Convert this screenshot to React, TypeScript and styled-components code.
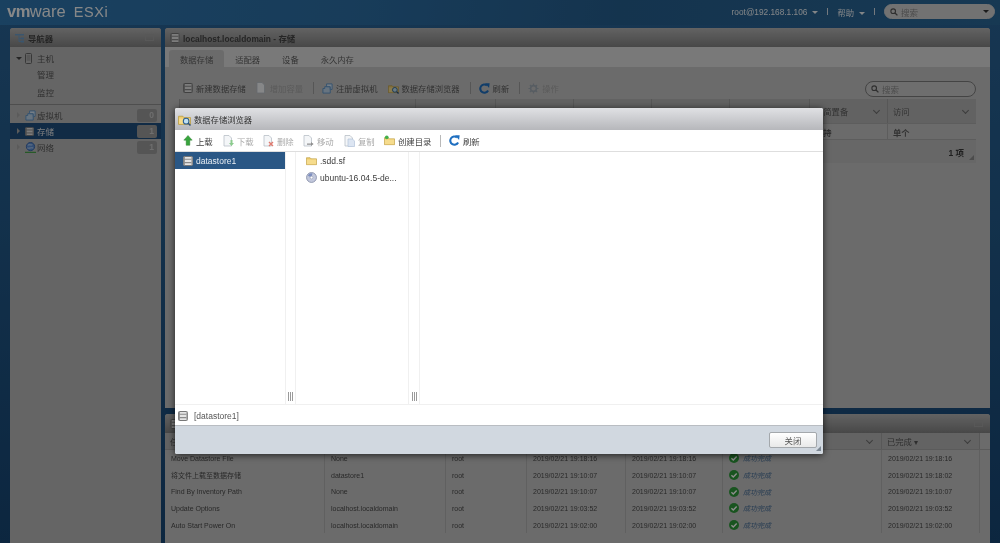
// App.tsx
import React from 'react';
import styled, { createGlobalStyle } from 'styled-components';

const GlobalStyle = createGlobalStyle`
  html, body {
    margin: 0;
    padding: 0;
    background: #14304c;
  }
  body {
    font-family: 'Liberation Sans', 'Noto Sans CJK SC', sans-serif;
    font-size: 8.5px;
    color: #555;
  }
`;

const Page = styled.div`
  position: relative;
  width: 1000px;
  height: 543px;
  overflow: hidden;
  display: flex;
  flex-direction: column;
  background: linear-gradient(180deg, #2a6496 0%, #235a8a 40%, #174674 100%);
  filter: blur(0.5px);
`;

const Dim = styled.div`
  position: absolute;
  inset: 0;
  background: rgba(0, 0, 0, 0.45);
`;

/* top bar */
const TopBar = styled.header`
  height: 25px;
  flex: none;
  display: flex;
  align-items: center;
  padding: 0 5px 0 7px;
  background: linear-gradient(100deg, #3077b0 0%, #2c6ea4 35%, #265f8f 62%, #2a6898 100%);
  color: #eef2f6;
`;

const Logo = styled.div`
  display: flex;
  align-items: baseline;
  font-size: 16.5px;
  color: #f6f7f8;
  margin-top: -2px;
`;

const LogoBold = styled.b`
  font-weight: 700;
  letter-spacing: -0.5px;
`;

const LogoEsx = styled.span`
  margin-left: 8px;
  letter-spacing: 0.6px;
  font-size: 14.5px;
`;

const TopRight = styled.div`
  margin-left: auto;
  display: flex;
  align-items: center;
  gap: 9px;
  font-size: 8.3px;
  margin-top: -2px;
`;

const Caret = styled.span`
  display: inline-block;
  width: 0;
  height: 0;
  margin-left: 5px;
  vertical-align: middle;
  border-left: 3px solid transparent;
  border-right: 3px solid transparent;
  border-top: 3px solid currentColor;
`;

const Pipe = styled.span`
  width: 1px;
  height: 7px;
  background: #d4dde6;
`;

const SearchBox = styled.div<{ $w: number; $h: number; $dark?: boolean }>`
  width: ${p => p.$w}px;
  height: ${p => p.$h}px;
  box-sizing: border-box;
  display: flex;
  align-items: center;
  gap: 3px;
  padding: 0 5px;
  border-radius: 8px;
  border: 1px solid ${p => (p.$dark ? '#7d7d7d' : '#d0d0d0')};
  background: ${p => (p.$dark ? '#c8c8c8' : '#cfcfcf')};
  color: #8a8a8a;
  font-size: 8.5px;
  ${p => (p.$dark ? 'margin-left: auto; margin-top: 2px;' : '')}
`;

const SearchCaret = styled(Caret)`
  margin-left: auto;
  color: #333;
`;

/* work area */
const Work = styled.div`
  flex: 1;
  min-height: 0;
  display: flex;
  gap: 4px;
  padding: 3px 10px 0;
`;

const Panel = styled.section<{ $grow?: boolean }>`
  display: flex;
  flex-direction: column;
  background: #b9b9b9;
  border-radius: 3px 3px 0 0;
  overflow: hidden;
  ${p => (p.$grow ? 'flex: 1; min-height: 0;' : '')}
`;

const SidePanel = styled(Panel)`
  width: 151px;
  flex: none;
`;

const MainCol = styled.div`
  flex: 1;
  min-width: 0;
  display: flex;
  flex-direction: column;
  gap: 6px;
`;

const PanelTitle = styled.div`
  height: 19px;
  flex: none;
  display: flex;
  align-items: center;
  gap: 3px;
  padding: 0 5px;
  background: linear-gradient(180deg, #b4b4b4, #838383);
  color: #444;
  font-size: 8.4px;
  font-weight: 700;
`;

const Pin = styled.span`
  margin-left: auto;
  width: 7px;
  height: 5px;
  margin-right: 2px;
  border: 1px solid #a0a0a0;
`;

/* navigator */
const NavBlock = styled.div`
  padding: 3px 0 2px;
  border-bottom: 1px solid #8e8e8e;
  margin-bottom: 2px;
`;

const NavRow = styled.div<{ $active?: boolean; $h?: number }>`
  height: ${p => p.$h ?? 16}px;
  display: flex;
  align-items: center;
  padding-left: 6px;
  padding-right: 4px;
  font-size: 8.5px;
  color: ${p => (p.$active ? '#e6e6e6' : '#575757')};
  background: ${p => (p.$active ? '#1f4f7f' : 'transparent')};
`;

const TwistSlot = styled.span`
  width: 9px;
  flex: none;
  display: flex;
  align-items: center;
`;

const IconSlot = styled.span`
  width: 12px;
  flex: none;
  display: flex;
  align-items: center;
`;

const Twist = styled.span<{ $open?: boolean }>`
  width: 0;
  height: 0;
  ${p =>
    p.$open
      ? `border-left: 3px solid transparent; border-right: 3px solid transparent; border-top: 3px solid #444;`
      : `border-top: 3px solid transparent; border-bottom: 3px solid transparent; border-left: 3px solid #a6a6a6; margin-left: 1px;`}
`;

const Badge = styled.span`
  margin-left: auto;
  width: 20px;
  height: 13px;
  border-radius: 2px;
  background: #9c9c9c;
  color: #c8c8c8;
  font-weight: 700;
  text-align: right;
  padding-right: 3px;
  box-sizing: border-box;
  line-height: 13px;
`;

/* storage panel */
const TabRow = styled.div`
  height: 20px;
  flex: none;
  display: flex;
  align-items: flex-end;
  padding-left: 4px;
  background: #dcdcdc;
`;

const Tab = styled.div<{ $active?: boolean }>`
  height: 17px;
  display: flex;
  align-items: center;
  justify-content: center;
  padding: 0 11px;
  background: ${p => (p.$active ? '#c4c4c4' : 'transparent')};
  border-radius: 3px 3px 0 0;
  font-size: 8.3px;
  color: #5f5f5f;
`;

const TabContent = styled.div`
  flex: 1;
  min-height: 0;
  background: #c4c4c4;
  padding: 12px 14px 0;
  display: flex;
  flex-direction: column;
`;

const ToolRow = styled.div`
  height: 18px;
  flex: none;
  display: flex;
  align-items: center;
  padding-left: 4px;
  font-size: 8.3px;
`;

const Tool = styled.span<{ $off?: boolean }>`
  display: inline-flex;
  align-items: center;
  gap: 3px;
  margin-right: 10px;
  color: ${p => (p.$off ? '#a4a4a4' : '#5b5b5b')};
`;

const ToolSep = styled.span`
  width: 1px;
  height: 12px;
  background: #9d9d9d;
  margin-right: 8px;
`;

const GridWrap = styled.div`
  margin-top: 2px;
  background: #bcbcbc;
`;

const GridHead = styled.div`
  height: 24px;
  display: grid;
  grid-template-columns: 236px 80px 78px 78px 78px 80px 78px 89px;
  background: #b2b2b2;
`;

const GridBody = styled(GridHead)`
  height: 17px;
  background: #c4c4c4;
  border-top: 1px solid #aaa;
  border-bottom: 1px solid #aaa;
  box-sizing: border-box;
`;

const HeadCell = styled.div`
  display: flex;
  align-items: center;
  padding: 0 4px 0 5px;
  border-left: 1px solid #9f9f9f;
  font-size: 8.3px;
  color: #5c5c5c;
`;

const BodyCell = styled(HeadCell)`
  font-weight: 600;
  border-left-color: #aaa;
`;

const Chevron = styled.span`
  margin-left: auto;
  margin-right: 4px;
  width: 4px;
  height: 4px;
  border-right: 1px solid #6e6e6e;
  border-bottom: 1px solid #6e6e6e;
  transform: translateY(-1px) rotate(45deg);
`;

const GridFoot = styled.div`
  height: 23px;
  position: relative;
  display: flex;
  align-items: center;
  justify-content: flex-end;
  padding-right: 12px;
  font-weight: 700;
  color: #3a3a3a;
`;

const Grip = styled.span<{ $light?: boolean }>`
  position: absolute;
  right: 2px;
  bottom: 3px;
  width: 0;
  height: 0;
  border-left: 5px solid transparent;
  border-bottom: 5px solid ${p => (p.$light ? '#7d8894' : '#8a8a8a')};
`;

/* recent tasks */
const TasksPanel = styled(Panel)`
  height: 129px;
  flex: none;
  background: #c4c4c4;
`;

const taskCols = '160px 121px 81px 99px 97px 159px 98px 10px';

const TaskHead = styled.div`
  height: 16px;
  flex: none;
  display: grid;
  grid-template-columns: ${taskCols};
  background: #b4b4b4;
  border-bottom: 1px solid #a6a6a6;
  font-size: 8.3px;
  color: #555;
`;

const TaskHeadCell = styled.div`
  display: flex;
  align-items: center;
  padding: 0 5px;
  border-right: 1px solid #a0a0a0;
`;

const TaskRow = styled.div`
  height: 16.7px;
  flex: none;
  display: grid;
  grid-template-columns: ${taskCols};
  font-size: 7px;
  color: #4a4a4a;
`;

const TaskCell = styled.div`
  display: flex;
  align-items: center;
  gap: 4px;
  padding: 0 6px;
  border-right: 1px solid #b0b0b0;
  white-space: nowrap;
`;

const StatusText = styled.i`
  color: #476d96;
`;

const EmptyCell = styled.div`
  background: #c4c4c4;
`;

/* datastore browser dialog */
const Dialog = styled.div`
  position: absolute;
  left: 175px;
  top: 108px;
  width: 648px;
  height: 346px;
  display: flex;
  flex-direction: column;
  background: #fff;
  border-radius: 2px;
  box-shadow: 0 1px 7px rgba(0, 0, 0, 0.7);
  overflow: hidden;
`;

const DialogTitle = styled.div`
  height: 22px;
  flex: none;
  display: flex;
  align-items: center;
  gap: 3px;
  padding-left: 3px;
  background: linear-gradient(180deg, #e0e1e4, #b6b7bb);
  color: #333;
  font-size: 8.3px;
`;

const DialogTools = styled.div`
  height: 21px;
  flex: none;
  display: flex;
  align-items: center;
  padding-left: 8px;
  border-bottom: 1px solid #dedede;
  font-size: 8.4px;
`;

const DTool = styled.span<{ $off?: boolean; $w: number }>`
  display: inline-flex;
  align-items: center;
  gap: 3px;
  width: ${p => p.$w}px;
  color: ${p => (p.$off ? '#a9a9a9' : '#3f3f3f')};
`;

const DSep = styled.span`
  width: 1px;
  height: 12px;
  background: #b9b9b9;
  margin: 0 8px 0 1px;
`;

const Columns = styled.div`
  flex: 1;
  min-height: 0;
  display: grid;
  grid-template-columns: 110px 11px 112px 12px 1fr;
  border-bottom: 1px solid #f0f0f0;
`;

const FileCol = styled.div`
  display: flex;
  flex-direction: column;
`;

const FileRow = styled.div<{ $active?: boolean }>`
  height: 17px;
  display: flex;
  align-items: center;
  gap: 3px;
  padding-left: ${p => (p.$active ? 8 : 10)}px;
  background: ${p => (p.$active ? '#2a5785' : 'transparent')};
  color: ${p => (p.$active ? '#e8eef4' : '#3b3b3b')};
  white-space: nowrap;
`;

const Splitter = styled.div`
  display: flex;
  align-items: flex-end;
  justify-content: center;
  padding-bottom: 3px;
  border-left: 1px solid #f0f0f0;
  border-right: 1px solid #f0f0f0;
`;

const SplitGrip = styled.span`
  width: 5px;
  height: 9px;
  background: repeating-linear-gradient(90deg, #9a9a9a 0 1px, #fff 1px 2px);
`;

const StatusBar = styled.div`
  height: 19px;
  flex: none;
  display: flex;
  align-items: center;
  gap: 6px;
  padding: 1px 0 0 3px;
  color: #555;
  border-bottom: 1px solid #b9bdc2;
`;

const DialogFoot = styled.div`
  position: relative;
  height: 28px;
  flex: none;
  display: flex;
  align-items: center;
  justify-content: flex-end;
  padding-right: 6px;
  background: #d1d8e0;
`;

const CloseButton = styled.button`
  width: 48px;
  height: 16px;
  padding: 0;
  border: 1px solid #a4a8ac;
  border-radius: 2px;
  background: linear-gradient(180deg, #fff, #e9e9e9);
  color: #555;
  font-family: inherit;
  font-size: 8.5px;
`;

/* icons */
const Disk: React.FC<{ s?: number }> = ({ s = 10 }) => (
  <svg width={s} height={s} viewBox="0 0 10 10">
    <rect x="0.5" y="0.5" width="9" height="9" rx="1" fill="#e4e4e4" stroke="#777" />
    <path d="M1 3.3h8M1 6.6h8" stroke="#8a8a8a" strokeWidth="1.1" />
    <path d="M1.2 1v8" stroke="#8f8f8f" strokeWidth="1.4" />
    <path d="M8.8 1v8" stroke="#a8a8a8" strokeWidth="1.2" />
  </svg>
);

const Folder: React.FC<{ s?: number; plus?: boolean; lens?: boolean }> = ({ s = 11, plus, lens }) => (
  <svg width={s} height={s} viewBox="0 0 12 12">
    <path d="M0.5 3h4l1 1.2h6v6.3h-11z" fill="#f0cd6c" stroke="#b89a3e" strokeWidth="0.7" />
    <path d="M1 5h10v5H1z" fill="#f6dc8d" />
    {plus && <circle cx="3" cy="2.5" r="2" fill="#44b04a" />}
    {lens && (
      <g>
        <circle cx="7.5" cy="7.5" r="2.6" fill="#bfe0f2" stroke="#2c5f92" strokeWidth="1" />
        <path d="M9.5 9.5l2 2" stroke="#2c4f78" strokeWidth="1.4" />
      </g>
    )}
  </svg>
);

const Refresh: React.FC<{ s?: number }> = ({ s = 11 }) => (
  <svg width={s} height={s} viewBox="0 0 12 12">
    <path d="M9.9 8.2A4.5 4.5 0 1 1 8.7 2.6" fill="none" stroke="#1f6fc0" strokeWidth="2.3" />
    <path d="M6.6 0.2L11.6 0.4 11 5.4z" fill="#1f6fc0" />
  </svg>
);

const Upload: React.FC = () => (
  <svg width="10" height="11" viewBox="0 0 10 12">
    <path d="M5 0.5L9.6 5.6H7v5.6H3V5.6H0.4z" fill="#38a53d" stroke="#2a7f2e" strokeWidth="0.5" />
  </svg>
);

const Doc: React.FC<{ mark?: 'down' | 'x' | 'move' | 'copy' }> = ({ mark }) => (
  <svg width="11" height="12" viewBox="0 0 11 12">
    <path d="M1 0.5h5l2.5 2.5v8H1z" fill="#f4f6f8" stroke="#b9c0c8" strokeWidth="0.8" />
    {mark === 'down' && <path d="M7.5 5v3H6l2.5 3L11 8H9.5V5z" fill="#8ccb8e" />}
    {mark === 'x' && <path d="M6 7l4 4M10 7l-4 4" stroke="#e07b70" strokeWidth="1.4" />}
    {mark === 'move' && <path d="M4 8.5h4V7l2.6 2L8 11V9.8H4z" fill="#8f8f8f" />}
    {mark === 'copy' && <path d="M4 4h4.5l2 2v5.5H4z" fill="#dce5f2" stroke="#b3c3da" strokeWidth="0.7" />}
  </svg>
);

const Gear: React.FC = () => (
  <svg width="11" height="11" viewBox="0 0 12 12">
    <circle cx="6" cy="6" r="3.2" fill="none" stroke="#9fa9b3" strokeWidth="1.8" />
    <path d="M6 0.5v2M6 9.5v2M0.5 6h2M9.5 6h2M2 2l1.5 1.5M8.5 8.5L10 10M10 2L8.5 3.5M3.5 8.5L2 10" stroke="#9fa9b3" strokeWidth="1.3" />
  </svg>
);

const Magnifier: React.FC = () => (
  <svg width="8" height="8" viewBox="0 0 8 8">
    <circle cx="3.2" cy="3.2" r="2.3" fill="none" stroke="#555" strokeWidth="1.1" />
    <path d="M5 5l2.4 2.4" stroke="#555" strokeWidth="1.3" />
  </svg>
);

const Tree: React.FC = () => (
  <svg width="10" height="10" viewBox="0 0 10 10">
    <path d="M0 1h9v1.5H0z" fill="#6c9cc6" />
    <path d="M4 2.5v6h2M4 5.5h2" fill="none" stroke="#6c9cc6" />
    <path d="M6 4.5h3v2H6zM6 7.5h3v2H6z" fill="#6c9cc6" />
  </svg>
);

const Phone: React.FC = () => (
  <svg width="7" height="11" viewBox="0 0 7 11">
    <rect x="0.5" y="0.5" width="6" height="10" rx="1" fill="#bbb" stroke="#666" />
    <rect x="1.6" y="1.8" width="3.8" height="6" fill="#a0a0a0" />
  </svg>
);

const Vms: React.FC = () => (
  <svg width="11" height="11" viewBox="0 0 12 12">
    <path d="M3 4h6v7H1V6h2z" fill="#bcd4ea" stroke="#5c94c8" />
    <path d="M5 1h6v6H9V4H5z" fill="#d6e6f5" stroke="#5c94c8" />
  </svg>
);

const Globe: React.FC = () => (
  <svg width="11" height="11" viewBox="0 0 12 12">
    <circle cx="6" cy="5" r="4.5" fill="#5c8fd6" stroke="#3a66ab" />
    <path d="M3 3.5c2-1.2 3 .3 5-.5M2.5 6.5c2 .8 4-.6 6.5 0" stroke="#d5e4f7" fill="none" strokeWidth="0.9" />
    <path d="M0 10.5h12V12H0z" fill="#45a34a" />
  </svg>
);

const Disc: React.FC = () => (
  <svg width="11" height="11" viewBox="0 0 12 12">
    <circle cx="6" cy="6" r="5.4" fill="#c2c8dc" stroke="#8d95ad" />
    <path d="M2 4a4.6 4.6 0 0 1 5-2.4L6 6z" fill="#7d8fc0" />
    <circle cx="6" cy="6" r="1.5" fill="#fff" stroke="#8d95ad" strokeWidth="0.6" />
  </svg>
);

const Done: React.FC = () => (
  <svg width="10" height="10" viewBox="0 0 10 10">
    <circle cx="5" cy="5" r="5" fill="#2f9a3b" />
    <path d="M2.4 5.2l1.9 1.9 3.4-3.6" fill="none" stroke="#fff" strokeWidth="1.4" />
  </svg>
);

const tasks = [
  ['Move Datastore File', 'None', 'root', '2019/02/21 19:18:16', '2019/02/21 19:18:16', '2019/02/21 19:18:16'],
  ['将文件上载至数据存储', 'datastore1', 'root', '2019/02/21 19:10:07', '2019/02/21 19:10:07', '2019/02/21 19:18:02'],
  ['Find By Inventory Path', 'None', 'root', '2019/02/21 19:10:07', '2019/02/21 19:10:07', '2019/02/21 19:10:07'],
  ['Update Options', 'localhost.localdomain', 'root', '2019/02/21 19:03:52', '2019/02/21 19:03:52', '2019/02/21 19:03:52'],
  ['Auto Start Power On', 'localhost.localdomain', 'root', '2019/02/21 19:02:00', '2019/02/21 19:02:00', '2019/02/21 19:02:00'],
];

const App: React.FC = () => (
  <Page>
    <GlobalStyle />
    <TopBar>
      <Logo>
        <LogoBold>vm</LogoBold>ware<LogoEsx>ESXi</LogoEsx>
      </Logo>
      <TopRight>
        <span>root@192.168.1.106<Caret /></span>
        <Pipe />
        <span>帮助<Caret /></span>
        <Pipe />
        <SearchBox $w={111} $h={15}>
          <Magnifier />
          <span>搜索</span>
          <SearchCaret />
        </SearchBox>
      </TopRight>
    </TopBar>

    <Work>
      <SidePanel>
        <PanelTitle>
          <Tree />
          导航器
          <Pin />
        </PanelTitle>
        <NavBlock>
          <NavRow>
            <TwistSlot><Twist $open /></TwistSlot>
            <IconSlot><Phone /></IconSlot>
            主机
          </NavRow>
          <NavRow>
            <TwistSlot />
            <IconSlot />
            管理
          </NavRow>
          <NavRow $h={20}>
            <TwistSlot />
            <IconSlot />
            监控
          </NavRow>
        </NavBlock>
        <NavRow>
          <TwistSlot><Twist /></TwistSlot>
          <IconSlot><Vms /></IconSlot>
          虚拟机
          <Badge>0</Badge>
        </NavRow>
        <NavRow $active>
          <TwistSlot><Twist /></TwistSlot>
          <IconSlot><Disk s={9} /></IconSlot>
          存储
          <Badge>1</Badge>
        </NavRow>
        <NavRow>
          <TwistSlot><Twist /></TwistSlot>
          <IconSlot><Globe /></IconSlot>
          网络
          <Badge>1</Badge>
        </NavRow>
      </SidePanel>

      <MainCol>
        <Panel $grow>
          <PanelTitle>
            <Disk />
            localhost.localdomain - 存储
          </PanelTitle>
          <TabRow>
            <Tab $active>数据存储</Tab>
            <Tab>适配器</Tab>
            <Tab>设备</Tab>
            <Tab>永久内存</Tab>
          </TabRow>
          <TabContent>
            <ToolRow>
              <Tool><Disk />新建数据存储</Tool>
              <Tool $off><Doc />增加容量</Tool>
              <ToolSep />
              <Tool><Vms />注册虚拟机</Tool>
              <Tool><Folder lens />数据存储浏览器</Tool>
              <ToolSep />
              <Tool><Refresh />刷新</Tool>
              <ToolSep />
              <Tool $off><Gear />操作</Tool>
              <SearchBox $w={111} $h={16} $dark>
                <Magnifier />
                <span>搜索</span>
              </SearchBox>
            </ToolRow>
            <GridWrap>
              <GridHead>
                <HeadCell />
                <HeadCell />
                <HeadCell />
                <HeadCell />
                <HeadCell />
                <HeadCell />
                <HeadCell>精简置备<Chevron /></HeadCell>
                <HeadCell>访问<Chevron /></HeadCell>
              </GridHead>
              <GridBody>
                <BodyCell />
                <BodyCell />
                <BodyCell />
                <BodyCell />
                <BodyCell />
                <BodyCell />
                <BodyCell>支持</BodyCell>
                <BodyCell>单个</BodyCell>
              </GridBody>
              <GridFoot>
                1 项
                <Grip />
              </GridFoot>
            </GridWrap>
          </TabContent>
        </Panel>

        <TasksPanel>
          <PanelTitle>
            <Disk />
            近期任务
            <Pin />
          </PanelTitle>
          <TaskHead>
            <TaskHeadCell>任务</TaskHeadCell>
            <TaskHeadCell>目标</TaskHeadCell>
            <TaskHeadCell>启动者</TaskHeadCell>
            <TaskHeadCell>已排队时间</TaskHeadCell>
            <TaskHeadCell>启动时间</TaskHeadCell>
            <TaskHeadCell>结果<Chevron /></TaskHeadCell>
            <TaskHeadCell>已完成 ▾<Chevron /></TaskHeadCell>
            <EmptyCell />
          </TaskHead>
          {tasks.map(t => (
            <TaskRow key={t[0]}>
              <TaskCell>{t[0]}</TaskCell>
              <TaskCell>{t[1]}</TaskCell>
              <TaskCell>{t[2]}</TaskCell>
              <TaskCell>{t[3]}</TaskCell>
              <TaskCell>{t[4]}</TaskCell>
              <TaskCell><Done /><StatusText>成功完成</StatusText></TaskCell>
              <TaskCell>{t[5]}</TaskCell>
              <EmptyCell />
            </TaskRow>
          ))}
        </TasksPanel>
      </MainCol>
    </Work>

    <Dim />

    <Dialog>
      <DialogTitle>
        <Folder s={13} lens />
        数据存储浏览器
      </DialogTitle>
      <DialogTools>
        <DTool $w={40}><Upload />上载</DTool>
        <DTool $w={40} $off><Doc mark="down" />下载</DTool>
        <DTool $w={40} $off><Doc mark="x" />删除</DTool>
        <DTool $w={41} $off><Doc mark="move" />移动</DTool>
        <DTool $w={40} $off><Doc mark="copy" />复制</DTool>
        <DTool $w={55}><Folder plus />创建目录</DTool>
        <DSep />
        <DTool $w={40}><Refresh />刷新</DTool>
      </DialogTools>
      <Columns>
        <FileCol>
          <FileRow $active><Disk />datastore1</FileRow>
        </FileCol>
        <Splitter><SplitGrip /></Splitter>
        <FileCol>
          <FileRow><Folder />.sdd.sf</FileRow>
          <FileRow><Disc />ubuntu-16.04.5-de...</FileRow>
        </FileCol>
        <Splitter><SplitGrip /></Splitter>
        <FileCol />
      </Columns>
      <StatusBar>
        <Disk />
        [datastore1]
      </StatusBar>
      <DialogFoot>
        <CloseButton>关闭</CloseButton>
        <Grip $light />
      </DialogFoot>
    </Dialog>
  </Page>
);

export default App;
